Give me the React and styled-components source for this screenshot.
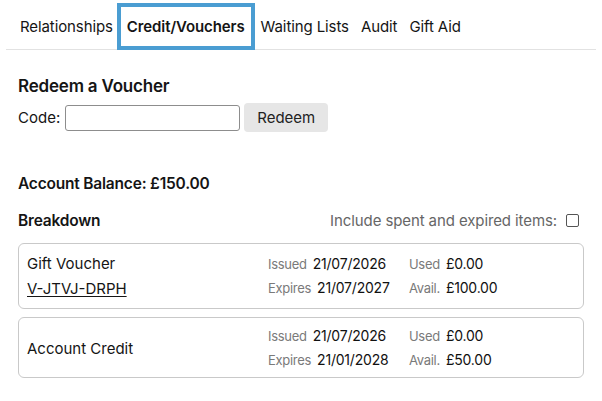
import React, { useState } from 'react';
import styled, { createGlobalStyle } from 'styled-components';

const Global = createGlobalStyle`
  body {
    margin: 0;
    background: #fff;
    font-family: Inter, "Noto Sans", sans-serif;
    color: #151515;
  }
  * { box-sizing: border-box; }
`;

const Page = styled.div`
  width: 602px;
  height: 401px;
  padding: 0 6px;
  overflow: hidden;
`;

const Tabs = styled.div`
  display: flex;
  align-items: flex-end;
  height: 50px;
  padding-left: 8px;
  border-bottom: 1px solid #e2e2e2;
`;

const Tab = styled.div`
  display: flex;
  align-items: center;
  height: 47px;
  padding: 0 ${p => (p.active ? '6px' : '2px')};
  margin: 0 0 -1px ${p => (p.active ? '-2px' : '0')};
  border: 4px solid ${p => (p.active ? '#4a9dd2' : 'transparent')};
  font-size: 15px;
  font-weight: ${p => (p.active ? 600 : 400)};
  letter-spacing: -0.1px;
  color: #151515;
  cursor: pointer;
`;

const Content = styled.div`
  padding: 0 12px;
`;

const H3 = styled.h3`
  margin: 0;
  font-size: ${p => (p.big ? '17px' : '15.5px')};
  font-weight: 600;
  letter-spacing: -0.2px;
`;

const Section = styled.div`
  padding-top: ${p => p.top || 0}px;
`;

const CodeRow = styled.div`
  display: flex;
  align-items: center;
  gap: 4px;
  margin-top: 7px;
  font-size: 15px;
`;

const Input = styled.input`
  width: 175px;
  height: 26px;
  margin-left: 1px;
  border: 1px solid #8d8d8d;
  border-radius: 3px;
  padding: 0 6px;
  font: inherit;
`;

const Button = styled.button`
  height: 29px;
  padding: 0 13px;
  border: none;
  border-radius: 4px;
  background: #e6e6e6;
  font: inherit;
  font-size: 15px;
  color: #222;
`;

const BreakdownHead = styled.div`
  display: flex;
  justify-content: space-between;
  align-items: center;
`;

const Toggle = styled.label`
  display: flex;
  align-items: center;
  gap: 9px;
  font-size: 15px;
  letter-spacing: -0.1px;
  color: #666;
  padding-right: 5px;
`;

const Box = styled.span`
  width: 13px;
  height: 13px;
  border: 1px solid #555;
  border-radius: 2px;
  background: ${p => (p.checked ? '#4a9dd2' : '#fff')};
`;

const Card = styled.div`
  display: grid;
  grid-template-columns: 241px 141px 1fr;
  align-items: center;
  margin-top: ${p => p.mt}px;
  padding: ${p => p.pad};
  border: 1px solid #c9c9c9;
  border-radius: 6px;
  width: 566px;
`;

const Left = styled.div`
  display: flex;
  flex-direction: column;
  font-size: 15px;
  line-height: 25px;
`;

const Ref = styled.a`
  color: #151515;
  text-decoration: underline;
  text-underline-offset: 2px;
`;

const Col = styled.div`
  display: flex;
  flex-direction: column;
  line-height: 23px;
`;

const Pair = styled.div`
  display: flex;
  align-items: baseline;
  gap: 6px;
  white-space: nowrap;
`;

const Label = styled.span`
  font-size: 13px;
  color: #7a7a7a;
  letter-spacing: -0.3px;
`;

const Value = styled.span`
  font-size: 14px;
  color: #111;
  letter-spacing: -0.2px;
`;

const tabs = ['Relationships', 'Credit/Vouchers', 'Waiting Lists', 'Audit', 'Gift Aid'];

const items = [
  { name: 'Gift Voucher', code: 'V-JTVJ-DRPH', issued: '21/07/2026', expires: '21/07/2027', used: '£0.00', avail: '£100.00', pad: '7px 8px', mt: 13 },
  { name: 'Account Credit', issued: '21/07/2026', expires: '21/01/2028', used: '£0.00', avail: '£50.00', pad: '6px 8px 5px', mt: 8 },
];

export default function App() {
  const [active, setActive] = useState(1);
  const [spent, setSpent] = useState(false);

  return (
    <Page>
      <Global />
      <Tabs>
        {tabs.map((t, i) => (
          <Tab key={t} active={i === active ? 1 : 0} onClick={() => setActive(i)}>{t}</Tab>
        ))}
      </Tabs>
      <Content>
        <Section top={26}>
          <H3 big>Redeem a Voucher</H3>
          <CodeRow>
            Code:
            <Input />
            <Button>Redeem</Button>
          </CodeRow>
        </Section>
        <Section top={42}>
          <H3>Account Balance: £150.00</H3>
        </Section>
        <Section top={18}>
          <BreakdownHead>
            <H3>Breakdown</H3>
            <Toggle onClick={() => setSpent(!spent)}>
              Include spent and expired items:
              <Box checked={spent} />
            </Toggle>
          </BreakdownHead>
          {items.map(it => (
            <Card key={it.name} pad={it.pad} mt={it.mt}>
              <Left>
                <span>{it.name}</span>
                {it.code && <Ref href="#">{it.code}</Ref>}
              </Left>
              <Col>
                <Pair><Label>Issued</Label><Value>{it.issued}</Value></Pair>
                <Pair><Label>Expires</Label><Value>{it.expires}</Value></Pair>
              </Col>
              <Col>
                <Pair><Label>Used</Label><Value>{it.used}</Value></Pair>
                <Pair><Label>Avail.</Label><Value>{it.avail}</Value></Pair>
              </Col>
            </Card>
          ))}
        </Section>
      </Content>
    </Page>
  );
}
